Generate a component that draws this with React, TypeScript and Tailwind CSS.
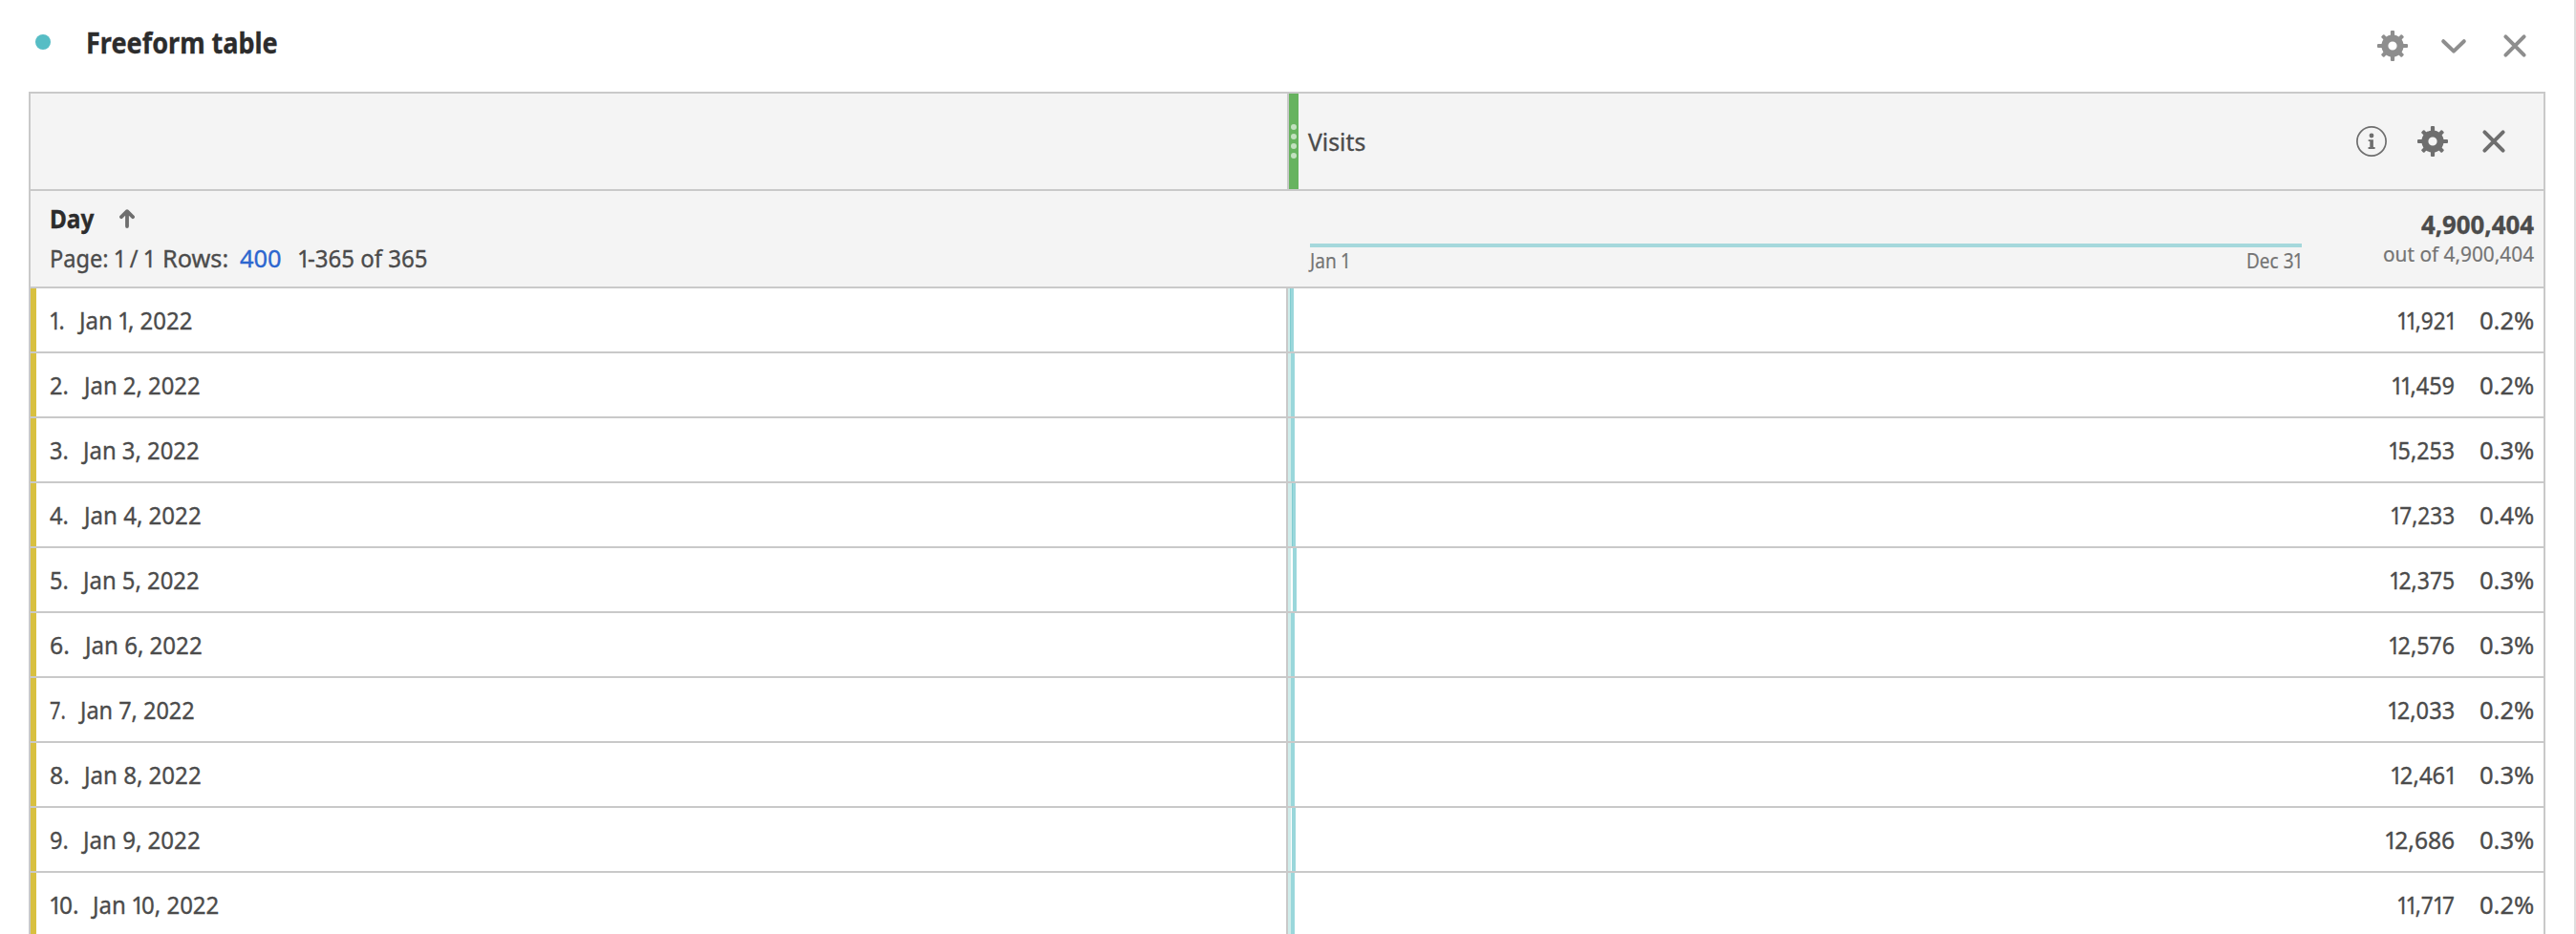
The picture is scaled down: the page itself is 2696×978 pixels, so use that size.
import { useLayoutEffect, useRef, useState, type ReactNode } from "react";

function figures(text: string): ReactNode {
  return text.split(/(1)/).map((part, i) =>
    part === "1" ? (
      <span key={i} className="-ml-[0.04em] -mr-[0.12em]">1</span>
    ) : (
      part
    ),
  );
}

/* Sets a line of text condensed to the given width. */
function Fit({ w, text, className = "" }: { w: number; text: string; className?: string }) {
  const ref = useRef<HTMLSpanElement>(null);
  const [scale, setScale] = useState(1);
  useLayoutEffect(() => {
    if (ref.current) setScale(w / ref.current.offsetWidth);
  }, [w, text]);
  return (
    <span className={`block shrink-0 whitespace-nowrap ${className}`} style={{ width: w }}>
      <span ref={ref} className="inline-block origin-left" style={{ transform: `scaleX(${scale})` }}>
        {figures(text)}
      </span>
    </span>
  );
}

function Gear({ className }: { className: string }) {
  const teeth = [0, 45, 90, 135, 180, 225, 270, 315];
  return (
    <svg viewBox="0 0 32 32" className={`h-8 w-8 ${className}`} fill="currentColor">
      {teeth.map((a) => (
        <rect
          key={a}
          x="13.9"
          y={a % 90 ? 0.8 : 0}
          width="4.2"
          height="8"
          rx="1.1"
          transform={`rotate(${a} 16 16)`}
        />
      ))}
      <circle cx="16" cy="16" r="8.1" fill="none" stroke="currentColor" strokeWidth="7" />
    </svg>
  );
}

function Cross({ className }: { className: string }) {
  return (
    <svg viewBox="0 0 32 32" className={`h-8 w-8 ${className}`} fill="none" stroke="currentColor" strokeWidth="4" strokeLinecap="round">
      <path d="M6.4 6.4 25.6 25.6M25.6 6.4 6.4 25.6" />
    </svg>
  );
}

function Chevron() {
  return (
    <svg viewBox="0 0 32 32" className="h-8 w-8 text-[#8e8e8e]" fill="none" stroke="currentColor" strokeWidth="4" strokeLinecap="round" strokeLinejoin="round">
      <path d="M5.2 11.2 16 21.6 26.8 11.2" />
    </svg>
  );
}

function Info() {
  return (
    <svg viewBox="0 0 32 32" className="h-8 w-8 text-[#6e6e6e]" fill="currentColor">
      <circle cx="16" cy="16" r="15.1" fill="none" stroke="currentColor" strokeWidth="1.7" />
      <circle cx="16" cy="10" r="2.4" />
      <path d="M12.7 14.2h5.2v7.8h1.7v1.9h-7v-1.9h1.7v-5.9h-1.6z" />
    </svg>
  );
}

type Row = {
  n: string;
  nw: number;
  date: string;
  gap: number;
  dw: number;
  visits: string;
  vw: number;
  pct: string;
  pale: number;
  blank: number;
  dark: number;
  teal: number;
};

const rows: Row[] = [
  { n: "1.", nw: 16, date: "Jan 1, 2022", gap: 15, dw: 118, visits: "11,921", vw: 60, pct: "0.2%", pale: 2, blank: 0, dark: 1, teal: 3 },
  { n: "2.", nw: 20, date: "Jan 2, 2022", gap: 16, dw: 122, visits: "11,459", vw: 66, pct: "0.2%", pale: 3, blank: 0, dark: 0, teal: 4 },
  { n: "3.", nw: 20, date: "Jan 3, 2022", gap: 15, dw: 122, visits: "15,253", vw: 69, pct: "0.3%", pale: 3, blank: 0, dark: 0, teal: 4 },
  { n: "4.", nw: 20, date: "Jan 4, 2022", gap: 16, dw: 123, visits: "17,233", vw: 67, pct: "0.4%", pale: 4, blank: 0, dark: 1, teal: 3 },
  { n: "5.", nw: 20, date: "Jan 5, 2022", gap: 15, dw: 122, visits: "12,375", vw: 68, pct: "0.3%", pale: 3, blank: 2, dark: 0, teal: 4 },
  { n: "6.", nw: 21, date: "Jan 6, 2022", gap: 16, dw: 123, visits: "12,576", vw: 69, pct: "0.3%", pale: 3, blank: 0, dark: 0, teal: 4 },
  { n: "7.", nw: 17, date: "Jan 7, 2022", gap: 15, dw: 120, visits: "12,033", vw: 70, pct: "0.2%", pale: 3, blank: 0, dark: 0, teal: 4 },
  { n: "8.", nw: 21, date: "Jan 8, 2022", gap: 15, dw: 123, visits: "12,461", vw: 67, pct: "0.3%", pale: 3, blank: 0, dark: 0, teal: 4 },
  { n: "9.", nw: 20, date: "Jan 9, 2022", gap: 15, dw: 123, visits: "12,686", vw: 73, pct: "0.3%", pale: 3, blank: 1, dark: 0, teal: 4 },
  { n: "10.", nw: 31, date: "Jan 10, 2022", gap: 14, dw: 132, visits: "11,717", vw: 60, pct: "0.2%", pale: 3, blank: 0, dark: 0, teal: 4 },
];

function TableRow({ row }: { row: Row }) {
  return (
    <div className="flex h-[68px] shrink-0 border-b-2 border-[#c9c9c9] bg-white text-[#4b4b4b]">
      <div className="w-1.5 bg-[#d8c040]" />
      <div className="flex w-[1308px] items-center pl-3.5">
        <Fit w={row.nw} text={row.n} />
        <div className="shrink-0" style={{ width: row.gap }} />
        <Fit w={row.dw} text={row.date} />
      </div>
      <div className="w-0.5 bg-[#c9c9c9]" />
      <div className="flex">
        <div className="bg-[#cfecea]" style={{ width: row.pale }} />
        <div style={{ width: row.blank }} />
        <div className="bg-[#82cdd0]" style={{ width: row.dark }} />
        <div className="bg-[#9ad7db]" style={{ width: row.teal }} />
      </div>
      <div className="flex flex-1 items-center justify-end gap-[26px] pr-2.5">
        <Fit w={row.vw} text={row.visits} />
        <Fit w={57} text={row.pct} />
      </div>
    </div>
  );
}

export default function App() {
  return (
    <div className="flex h-[978px] w-[2696px] flex-col overflow-hidden border-r-2 border-[#dedede] bg-white pl-[30px] pr-[30px] font-['Noto_Sans',sans-serif] text-[26px] leading-[34px] text-[#4b4b4b] [-webkit-text-stroke:0.35px_currentColor]">
      <header className="flex h-24 shrink-0 items-start pl-[7px] pr-4">
        <div className="mt-9 h-4 w-4 rounded-full bg-[#56bdc5]" />
        <Fit w={201} text="Freeform table" className="ml-[37px] mt-7 text-[30px] font-bold text-[#2c2c2c]" />
        <div className="ml-auto mt-8 flex gap-8">
          <Gear className="text-[#8e8e8e]" />
          <Chevron />
          <Cross className="text-[#8e8e8e]" />
        </div>
      </header>

      <main className="flex flex-1 flex-col overflow-hidden border-x-2 border-t-2 border-[#c9c9c9]">
        <div className="flex h-[102px] shrink-0 border-b-2 border-[#c9c9c9] bg-[#f4f4f4]">
          <div className="w-[1317px] border-r-2 border-[#c9c9c9]" />
          <div className="flex w-2.5 flex-col items-center justify-center gap-1 bg-[#67b35f]">
            <i className="h-1.5 w-1.5 rounded-full bg-[#c3e1c0]" />
            <i className="h-1.5 w-1.5 rounded-full bg-[#c3e1c0]" />
            <i className="h-1.5 w-1.5 rounded-full bg-[#c3e1c0]" />
            <i className="h-1.5 w-1.5 rounded-full bg-[#c3e1c0]" />
          </div>
          <div className="flex flex-1 items-center pl-2.5 pr-9">
            <Fit w={60} text="Visits" />
            <div className="ml-auto flex gap-8">
              <Info />
              <Gear className="text-[#6e6e6e]" />
              <Cross className="text-[#6e6e6e]" />
            </div>
          </div>
        </div>

        <div className="flex h-[102px] shrink-0 border-b-2 border-[#c9c9c9] bg-[#f4f4f4]">
          <div className="w-[1339px] pl-5 pt-3">
            <div className="flex items-center">
              <Fit w={46} text="Day" className="font-bold text-[#2c2c2c]" />
              <svg viewBox="0 0 16 20" className="ml-[27px] h-5 w-4 text-[#6e6e6e]" fill="none" stroke="currentColor" strokeWidth="3.8" strokeLinecap="round" strokeLinejoin="round">
                <path d="M8 18V2.4M2 8.2 8 2.2 14 8.2" />
              </svg>
            </div>
            <div className="mt-[7px] flex">
              <Fit w={108} text="Page: 1 / 1" />
              <Fit w={69} text="Rows:" className="ml-[10px]" />
              <Fit w={44} text="400" className="ml-[12px] text-[#2c66cf]" />
              <Fit w={136} text="1-365 of 365" className="ml-[17px]" />
            </div>
          </div>
          <div className="w-[1038px] pt-[55px] text-[21px] leading-[28px] text-[#747474] [-webkit-text-stroke:0.2px_currentColor]">
            <div className="h-1 bg-[#a5d8dc]" />
            <div className="flex justify-between">
              <Fit w={41} text="Jan 1" />
              <Fit w={57} text="Dec 31" className="mr-px" />
            </div>
          </div>
          <div className="flex flex-1 flex-col items-end pr-2.5 pt-[18px]">
            <Fit w={118} text="4,900,404" className="font-bold" />
            <Fit w={158} text="out of 4,900,404" className="text-[22px] leading-[26px] text-[#747474] [-webkit-text-stroke:0.2px_currentColor]" />
          </div>
        </div>

        {rows.map((row) => (
          <TableRow key={row.n} row={row} />
        ))}
      </main>
    </div>
  );
}
